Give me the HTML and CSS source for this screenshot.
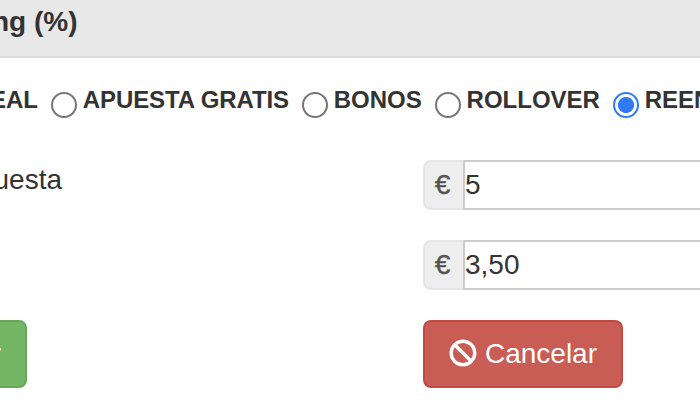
FILE: index.html
```html
<!DOCTYPE html>
<html lang="es">
<head>
    <meta charset="UTF-8">
    <meta name="viewport" content="width=device-width, initial-scale=1.0">
    <title>Apuesta</title>
    <link rel="stylesheet" href="styles.css">
</head>
<body>
    <h3 class="panel-heading">ng (%)</h3>
    <div class="bet-types">
        <label>EAL</label>
        <label><input type="radio" name="type"><span class="free-bet">APUESTA GRATIS</span></label>
        <label><input type="radio" name="type"><span>BONOS</span></label>
        <label><input type="radio" name="type"><span>ROLLOVER</span></label>
        <label><input type="radio" name="type" checked><span>REEN</span></label>
    </div>
    <div class="form-row">
        <div class="field-name">uesta</div>
        <div class="input-group">
            <span class="addon">€</span>
            <input class="amount" type="text" value="5">
        </div>
    </div>
    <div class="form-row">
        <div class="field-name"></div>
        <div class="input-group">
            <span class="addon">€</span>
            <input class="amount" type="text" value="3,50">
        </div>
    </div>
    <div class="form-row">
        <button class="btn btn-success">r</button>
        <button class="btn btn-danger">
            <svg class="icon" viewBox="0 0 28 28">
                <circle cx="14" cy="14" r="11.8"/>
                <path d="M6 6l16 16"/>
            </svg>
            <span>Cancelar</span>
        </button>
    </div>
</body>
</html>
```
FILE: styles.css
```css
* {
    box-sizing: border-box;
}
body {
    margin: 0;
    height: 400px;
    overflow: hidden;
    background: #fff;
    color: #333;
    font-family: "Liberation Sans", Arial, sans-serif;
    font-size: 28px;
    line-height: 40px;
}
.panel-heading {
    height: 58px;
    margin: 0;
    padding-top: 2px;
    background: #e8e8e8;
    border-bottom: 2px solid #ddd;
    font-size: 28px;
    text-indent: -8px;
}
.bet-types {
    display: flex;
    height: 102px;
    padding-top: 22px;
    margin-left: -10px;
    gap: 13.3px;
    overflow: hidden;
    white-space: nowrap;
}
.bet-types label {
    display: flex;
    gap: 5.5px;
    font-size: 24px;
    font-weight: bold;
}
.bet-types .free-bet {
    letter-spacing: -0.1px;
}
.bet-types input {
    appearance: none;
    flex: none;
    width: 26px;
    height: 26px;
    margin: 12px 0 0;
    border: 2px solid #767676;
    border-radius: 50%;
    background: #fff;
}
.bet-types input:checked {
    border-color: #2f7bf6;
    background: radial-gradient(circle, #2f7bf6 7.6px, #fff 8.4px);
}
.form-row {
    display: grid;
    grid-template-columns: 423px 1fr;
    height: 80px;
    align-items: start;
    overflow: hidden;
}
.field-name {
    margin-left: -6.5px;
}
.input-group {
    display: flex;
    height: 50px;
}
.addon {
    width: 40px;
    padding: 3px 3px 0 0;
    background: #eee;
    border: 2px solid #e5e5e5;
    border-right: 0;
    border-radius: 8px 0 0 8px;
    color: #555;
    text-align: center;
    -webkit-text-stroke: 0.4px #555;
}
.amount {
    flex: 1;
    min-width: 0;
    padding: 0;
    border: 2px solid #ccc;
    border-right: 0;
    background: #fff;
    color: #333;
    font: inherit;
}
.btn {
    display: flex;
    align-items: center;
    justify-content: center;
    gap: 8px;
    height: 68px;
    padding: 0 24px;
    border: 2px solid;
    border-radius: 8px;
    color: #fff;
    font: inherit;
}
.btn-success {
    width: 200px;
    margin-left: -173px;
    justify-content: flex-end;
    background: #74b566;
    border-color: #67a857;
}
.btn-danger {
    width: 200px;
    background: #c95c54;
    border-color: #c24a41;
}
.icon {
    width: 28px;
    height: 28px;
    margin-bottom: 3px;
    fill: none;
    stroke: #fff;
    stroke-width: 3.4;
}
```
